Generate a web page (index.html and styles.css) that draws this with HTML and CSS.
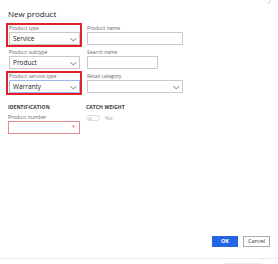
FILE: index.html
```html
<!DOCTYPE html>
<html>
<head>
<meta charset="utf-8">
<link rel="stylesheet" href="styles.css">
</head>
<body>
<div class="dialog">
  <span class="corner"></span>
  <h1 class="title">New product</h1>
  <div class="grid">
    <div class="field hl">
      <div class="label">Product type</div>
      <div class="control select">Service<span class="chev"></span></div>
    </div>
    <div class="field">
      <div class="label">Product name</div>
      <div class="control wide"></div>
    </div>
    <div class="field">
      <div class="label">Product subtype</div>
      <div class="control select">Product<span class="chev"></span></div>
    </div>
    <div class="field">
      <div class="label">Search name</div>
      <div class="control mid"></div>
    </div>
    <div class="field hl">
      <div class="label">Product service type</div>
      <div class="control select focus">Warranty<span class="chev"></span></div>
    </div>
    <div class="field">
      <div class="label">Retail category</div>
      <div class="control select wide"><span class="chev"></span></div>
    </div>
  </div>
  <div class="grid sections">
    <div class="section">
      <div class="heading">IDENTIFICATION</div>
      <div class="label">Product number</div>
      <div class="control required"><span class="star">*</span></div>
    </div>
    <div class="section">
      <div class="heading">CATCH WEIGHT</div>
      <div class="toggle-row"><span class="toggle"><span class="knob"></span></span><span class="no">No</span></div>
    </div>
  </div>
  <div class="spacer"></div>
  <div class="buttons">
    <button class="btn primary">OK</button>
    <button class="btn">Cancel</button>
  </div>
  <div class="footer"><span class="bar"></span></div>
</div>
</body>
</html>
```

FILE: styles.css
```css
html, body {
  margin: 0;
  padding: 0;
  background: #fff;
}
body {
  font-family: "Open Sans", "Noto Sans", sans-serif;
  color: #333;
  width: 278px;
  height: 264px;
  overflow: hidden;
}
.dialog {
  position: relative;
  height: 264px;
  display: flex;
  flex-direction: column;
  padding: 0 6px;
  box-sizing: border-box;
}
.corner {
  position: absolute;
  right: 8px;
  top: 0;
  width: 1px;
  height: 4px;
  background: #ccc;
  transform: rotate(30deg);
}
.title {
  margin: 7px 0 0 2px;
  font-size: 8px;
  font-weight: 400;
  line-height: 13px;
  color: #222;
}
.grid {
  display: grid;
  grid-template-columns: 76px 100px;
  column-gap: 2px;
  margin-top: 3px;
}
.field {
  border: 2px solid transparent;
  padding: 0 0 0 1px;
  height: 20px;
  display: flex;
  flex-direction: column;
}
.field.hl {
  border-color: #e0202a;
}
.label {
  font-size: 5px;
  line-height: 7px;
  color: #666;
  white-space: nowrap;
}
.control {
  position: relative;
  box-sizing: border-box;
  height: 13px;
  width: 71px;
  border: 1px solid #c8c8c8;
  background: #fff;
  font-size: 6.5px;
  line-height: 11px;
  padding-left: 3px;
  color: #222;
}
.control.wide {
  width: 96px;
}
.control.mid {
  width: 71px;
}
.control.focus {
  border-color: #9bb8e8;
}
.chev {
  position: absolute;
  right: 4px;
  top: 2.5px;
  width: 3.5px;
  height: 3.5px;
  border-right: 0.6px solid #888;
  border-bottom: 0.6px solid #888;
  transform: scaleY(0.8) rotate(45deg);
}
.sections {
  margin-top: 9px;
}
.section {
  padding-left: 2px;
}
.heading {
  font-size: 5px;
  font-weight: 700;
  line-height: 7px;
  color: #333;
  letter-spacing: 0.1px;
}
.section .label {
  margin-top: 3px;
}
.control.required {
  width: 72px;
  border-color: #e08a8c;
}
.star {
  position: absolute;
  right: 4px;
  top: 0;
  color: #e05050;
  font-size: 6px;
}
.toggle-row {
  display: flex;
  align-items: center;
  gap: 5px;
  margin-top: 3px;
}
.toggle {
  position: relative;
  width: 14px;
  height: 6px;
  border: 1px solid #ddd;
  border-radius: 4px;
  box-sizing: border-box;
  background: #fff;
}
.knob {
  position: absolute;
  left: 1px;
  top: 0.5px;
  width: 4px;
  height: 4px;
  border-radius: 50%;
  background: #ddd;
}
.no {
  font-size: 5.5px;
  color: #aaa;
}
.spacer {
  flex: 1;
}
.buttons {
  display: flex;
  justify-content: flex-end;
  gap: 5px;
  padding-right: 2px;
}
.btn {
  margin: 0;
  width: 27px;
  height: 11px;
  padding: 0;
  font-family: inherit;
  font-size: 5.5px;
  line-height: 9px;
  border: 1px solid #aaa;
  background: #fff;
  color: #333;
}
.btn.primary {
  width: 26px;
  background: #2266e3;
  border-color: #2266e3;
  color: #fff;
  font-weight: 700;
}
.footer {
  margin: 11px -6px 0;
  height: 5px;
  border-top: 1px solid #ececec;
  display: flex;
  justify-content: flex-end;
  align-items: flex-end;
  padding-right: 16px;
}
.bar {
  width: 37px;
  height: 1px;
  background: #ececec;
}
```
